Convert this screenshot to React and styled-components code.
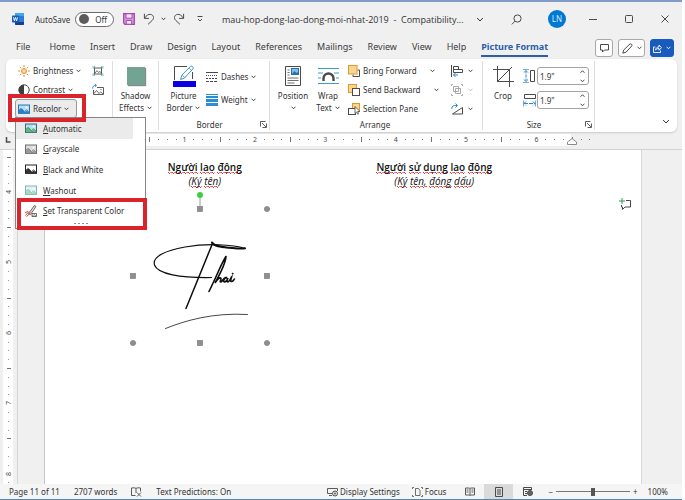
import React, { useState } from 'react';
import styled, { createGlobalStyle } from 'styled-components';


const GlobalStyle = createGlobalStyle`
  * {
    box-sizing: border-box;
  }

  body {
    margin: 0;
    background-color: #ffffff;
    font-family: 'Noto Sans', 'Open Sans', sans-serif;
    font-size: 8px;
    color: #333333;
  }

  button, input {
    margin: 0;
    padding: 0;
    border: none;
    background: none;
    font: inherit;
    color: inherit;
  }

  svg {
    display: block;
    flex-shrink: 0;
  }
`;

const Window = styled.div`
  display: flex;
  flex-direction: column;
  min-height: 100vh;
  margin-right: 3px;
  border-top: 2px solid #819cc9;
  border-bottom: 1px solid #4f86b8;
  background-color: #f0f0f0;
`;

/* title bar */

const TitleBar = styled.header`
  display: flex;
  align-items: center;
  height: 34px;
  padding: 0 10px 0 12px;
`;

const QuickAccess = styled.div`
  display: flex;
  align-items: center;
  width: 210px;
`;

const AutoSave = styled.label`
  display: flex;
  align-items: center;
  gap: 5px;
  margin: 0 6px 0 11px;
`;

const Toggle = styled.span`
  display: flex;
  align-items: center;
  gap: 6px;
  width: 39px;
  height: 15px;
  padding-left: 3px;
  border: 1px solid #6b6b6b;
  border-radius: 8px;
  background-color: #ffffff;

  input {
    appearance: none;
    width: 10px;
    height: 10px;
    border-radius: 50%;
    background-color: #5c5c5c;
  }
`;

const IconButton = styled.button`
  display: flex;
  align-items: center;
  justify-content: center;
  width: ${(props) => props.$width || 14}px;
  height: 16px;
`;

const DocTitle = styled.div`
  flex: 1;
  display: flex;
  align-items: center;
  gap: 12px;
  font-family: 'Open Sans', sans-serif;
  font-size: 9px;
  white-space: pre;
`;

const WindowButtons = styled.div`
  display: flex;
  align-items: center;
`;

const Avatar = styled.span`
  width: 18px;
  height: 18px;
  margin: 0 20px 0 25px;
  border-radius: 50%;
  background-color: #0078d4;
  color: #d9ecfb;
  line-height: 18px;
  text-align: center;
`;

/* tabs */

const TabBar = styled.div`
  display: flex;
  align-items: center;
  height: 23px;
  padding: 1px 8px 0 16px;
`;

const Tabs = styled.nav`
  flex: 1;
  display: flex;
  gap: 15px;
  font-size: 9px;
`;

const Tab = styled.button`
  height: 18px;
  line-height: 16px;
  white-space: nowrap;
  font-weight: ${(props) => (props.$active ? 700 : 400)};
  color: ${(props) => (props.$active ? '#2b5fa8' : '#3b3b3b')};
  border-bottom: 2px solid ${(props) => (props.$active ? '#2b5fa8' : 'transparent')};

  &:first-child {
    margin-right: 4px;
  }
`;

const TabActions = styled.div`
  display: flex;
  gap: 5px;
`;

const ActionButton = styled.button`
  display: flex;
  align-items: center;
  justify-content: center;
  gap: 4px;
  width: ${(props) => props.$width}px;
  height: 18px;
  border: 1px solid ${(props) => (props.$primary ? '#185abd' : '#a8a8a8')};
  border-radius: 3px;
  background-color: ${(props) => (props.$primary ? '#185abd' : '#ffffff')};
  color: ${(props) => (props.$primary ? '#ffffff' : '#3b3b3b')};
`;

/* ribbon */

const Ribbon = styled.section`
  display: flex;
  height: 73px;
  margin: 0 5px 0 6px;
  padding: 2px 0;
  border-radius: 6px;
  background-color: #ffffff;
  box-shadow: 0 1px 2px #c9c9c9;
`;

const Group = styled.div`
  display: flex;
  flex-direction: column;
  width: ${(props) => props.$width}px;
  border-right: 1px solid #dedede;
`;

const GroupBody = styled.div`
  display: flex;
  height: 57px;
  padding-left: ${(props) => props.$indent || 0}px;
`;

const GroupLabel = styled.div`
  display: flex;
  align-items: center;
  height: 12px;
  padding-right: 2px;
  text-align: center;

  span {
    flex: 1;
  }
`;

const Stack = styled.div`
  display: flex;
  flex-direction: column;
  justify-content: ${(props) => (props.$gap ? 'flex-start' : 'center')};
  width: ${(props) => props.$width}px;
  padding-top: ${(props) => (props.$gap ? 6 : 0)}px;
  padding-left: ${(props) => props.$indent || 0}px;
  gap: ${(props) => props.$gap || 0}px;
`;

const ToolButton = styled.button`
  display: flex;
  align-items: center;
  gap: ${(props) => props.$gap || 3}px;
  height: 19px;
  white-space: nowrap;
`;

const Split = styled.span`
  display: flex;
  margin-left: 10px;
`;

const BigButton = styled.button`
  display: flex;
  flex-direction: column;
  align-items: center;
  width: ${(props) => props.$width}px;

  .icon {
    display: flex;
    align-items: center;
    height: 29px;
  }

  .line {
    display: flex;
    align-items: center;
    gap: 3px;
    height: 12px;
    line-height: 12px;
    white-space: nowrap;
  }
`;

const ShadowSwatch = styled.span`
  width: 18px;
  height: 18px;
  background-color: #72a393;
  box-shadow: 1px 1px 1px #8a8a8a;
`;

const RecolorBox = styled.div`
  position: relative;
  width: 62px;
  margin-left: -3px;
`;

const RecolorButton = styled.button`
  display: flex;
  align-items: center;
  gap: 3px;
  width: 100%;
  height: 19px;
  padding-left: 2px;
  border: 1px solid #9b9b9b;
  border-radius: 3px;
  background-color: #ebebeb;
`;

const Highlight = styled.span`
  position: absolute;
  z-index: 3;
  inset: ${(props) => props.$inset};
  border: 4px solid #da232b;
  pointer-events: none;
`;

const Menu = styled.div`
  position: absolute;
  z-index: 2;
  top: 18px;
  left: 0;
  display: flex;
  flex-direction: column;
  width: 131px;
  height: 112px;
  border: 1px solid #868686;
  background-color: #ffffff;
`;

const MenuItem = styled.button`
  flex: 1;
  display: flex;
  align-items: center;
  gap: 6px;
  width: 117px;
  padding-left: 9px;
  background-color: ${(props) => (props.$hover ? '#ebebeb' : 'transparent')};
  white-space: nowrap;

  u {
    text-underline-offset: 1px;
  }
`;

const MenuGrip = styled.div`
  display: flex;
  justify-content: center;
  gap: 2px;
  height: 7px;
  padding-top: 2px;

  i {
    width: 2px;
    height: 1px;
    background-color: #8f8f8f;
  }
`;

const SizeField = styled.label`
  display: flex;
  align-items: center;
`;

const Spinner = styled.span`
  display: flex;
  align-items: center;
  width: 52px;
  height: 18px;
  padding: 0 3px 0 2px;
  border: 1px solid #a3a3a3;
  border-radius: 3px;

  input {
    flex: 1;
    min-width: 0;
    outline: none;
  }
`;

const SpinnerArrows = styled.span`
  display: flex;
  flex-direction: column;
  gap: 5px;
`;

const Collapse = styled.button`
  align-self: flex-end;
  margin: 0 7px 6px auto;
`;

/* document */

const RulerBar = styled.div`
  display: flex;
  height: 18px;
  padding: 2px 0 0 5px;
  border-bottom: 1px solid #d2d2d2;
`;

const Workspace = styled.main`
  flex: 1;
  display: flex;
`;

const SideRuler = styled.div`
  width: 18px;
  padding-left: 3px;
  border-right: 1px solid #d6d6d6;
`;

const Page = styled.article`
  flex: 1;
  display: grid;
  grid-template-columns: 1fr 1fr 92px;
  align-content: start;
  margin: 0 40px 0 26px;
  padding: 10px 0 0 45px;
  border-left: 1px solid #c6c6c6;
  border-right: 1px solid #d6d6d6;
  background-color: #ffffff;
  color: #111111;
  font-family: 'Open Sans', 'Noto Sans', sans-serif;
  font-size: 10px;
  line-height: 14px;
  text-align: center;

  p {
    margin: 0;
  }

  b {
    font-weight: 600;
  }
`;

const Misspelt = styled.span`
  background:
    linear-gradient(45deg, transparent 65%, #d8322c 80%, transparent 90%),
    linear-gradient(135deg, transparent 5%, #d8322c 15%, transparent 25%),
    linear-gradient(135deg, transparent 45%, #d8322c 55%, transparent 65%),
    linear-gradient(45deg, transparent 25%, #d8322c 35%, transparent 50%);
  background-repeat: repeat-x;
  background-size: 4px 2px;
  background-position: 0 100%;
`;

const Picture = styled.div`
  margin: 7px 0 0 43px;

  svg {
    overflow: visible;
  }
`;

const CommentMark = styled.div`
  padding: 38px 0 0 70px;
`;

/* status bar */

const StatusBar = styled.footer`
  display: flex;
  align-items: center;
  height: 15px;
  padding: 0 14px 0 9px;
  background-color: #f5f5f5;
  white-space: nowrap;
`;

const StatusGroup = styled.div`
  display: flex;
  align-items: center;
  gap: ${(props) => (props.$grow ? 14 : 12)}px;
  flex: ${(props) => (props.$grow ? 1 : 'none')};
  margin-right: 9px;
`;

const StatusButton = styled.button`
  display: flex;
  align-items: center;
  gap: 2px;
`;

const ViewButton = styled.button`
  display: flex;
  align-items: center;
  justify-content: center;
  width: 29px;
  height: 15px;
  background-color: ${(props) => (props.$active ? '#dadada' : 'transparent')};
`;

const ZoomControl = styled.label`
  display: flex;
  align-items: center;
  gap: 3px;
  margin: 0 10px 0 6px;

  input {
    appearance: none;
    width: 74px;
    height: 15px;
    background: linear-gradient(#777777, #777777) center / 100% 1px no-repeat;
  }

  input::-webkit-slider-thumb {
    appearance: none;
    width: 4px;
    height: 8px;
    background-color: #555555;
  }
`;


function Chevron({ size = 6, up = false, color = 'currentColor' }) {
  return (
    <svg width={size} height={size / 2 + 1} viewBox="0 0 6 4" fill="none" stroke={color} strokeWidth={size > 6 ? 0.8 : 1.1}>
      <path d={up ? 'M.7 3.2 3 .8l2.3 2.4' : 'M.7.8 3 3.2 5.3.8'} />
    </svg>
  );
}

function Icon({ w = 12, h = 12, children }) {
  return (
    <svg width={w} height={h} viewBox={`0 0 ${w} ${h}`} fill="none" stroke="#4a4a4a" strokeWidth="1">
      {children}
    </svg>
  );
}

function WordLogo() {
  return (
    <Icon>
      <g stroke="none">
        <rect x="3" y="0" width="9" height="12" rx="1" fill="#2b7cd3" />
        <path d="M3 1a1 1 0 0 1 1-1h7a1 1 0 0 1 1 1v2H3z" fill="#41a5ee" />
        <path d="M3 9h9v2a1 1 0 0 1-1 1H4a1 1 0 0 1-1-1z" fill="#103f91" />
        <rect x="0" y="2.5" width="7" height="7" rx=".8" fill="#185abd" />
      </g>
      <path d="m1.5 4.2.9 3.6 1.1-3.4 1.1 3.4.9-3.6" stroke="#ffffff" strokeWidth=".9" />
    </Icon>
  );
}

function SaveIcon() {
  return (
    <Icon>
      <path d="M.7.7h10.6v10.6H1.9L.7 10z" fill="#d69add" stroke="#a23fae" strokeWidth="1.2" />
      <path d="M3 .8h6v4.4H3zM3.3 7.5h5.4v3.7H3.3z" fill="#f6ebf7" stroke="#a23fae" strokeWidth=".9" />
    </Icon>
  );
}

function UndoIcon({ redo }) {
  return (
    <Icon>
      <path
        transform={redo ? 'matrix(-1 0 0 1 12 0)' : undefined}
        d="M1.4.8v4.6h4.5M1.6 5.2C3.2 2.6 5.2 1 7.6 1.4c3 .5 3.8 3.7 1.9 5.7L5 11.4"
      />
    </Icon>
  );
}

function PhotoIcon({ sky = '#b9dcf5', hill = '#2a7fc9', line = '#2b76b9' }) {
  return (
    <Icon w={12} h={10}>
      <rect x=".5" y="1" width="11" height="8.4" fill={sky} stroke={line} />
      <path d="M1 6.4c1-1.4 2-2.2 3-1.5l3 3 1.6-1.5L11 8.2v.8H1z" fill={hill} stroke="none" />
      <path d="M1 6.2c1-1.4 2-2.2 3-1.2L7.6 9M7 7l1.6-1.2L11 8" stroke={line} strokeWidth=".7" />
      <circle cx="8.6" cy="3.4" r="1" fill="#ffffff" stroke="none" />
    </Icon>
  );
}

function SunIcon() {
  return (
    <Icon>
      <circle cx="6" cy="6" r="2.5" fill="#fbd3a0" stroke="#e8912d" />
      <path d="M6 0v2M6 10v2M0 6h2M10 6h2M1.8 1.8l1.4 1.4M8.8 8.8l1.4 1.4M1.8 10.2l1.4-1.4M8.8 3.2l1.4-1.4" stroke="#e8912d" />
    </Icon>
  );
}

function ContrastIcon() {
  return (
    <Icon>
      <circle cx="6" cy="6" r="5.2" fill="#ffffff" />
      <path d="M6 .8a5.2 5.2 0 0 0 0 10.4z" fill="#3d3d3d" stroke="none" />
    </Icon>
  );
}

function CompressIcon() {
  return (
    <Icon>
      <rect x="2.5" y="3" width="7" height="6" strokeWidth=".9" />
      <path d="m3 8 2-2.4 1.6 1.9L8 6.4 9.3 8" strokeWidth=".8" />
      <path d="m.5 1 2 2m0-2v2h-2M11.5 1l-2 2m0-2v2h2M.5 11l2-2m0 2V9h-2M11.5 11l-2-2m0 2V9h2" stroke="#4b9c9a" strokeWidth=".7" />
    </Icon>
  );
}

function ChangePictureIcon() {
  return (
    <Icon>
      <path d="M5 3.5h6.5v7h-10V6" strokeWidth=".9" />
      <path d="m2 9.5 2.5-3 2.5 3 1.5-1.7L11 10" strokeWidth=".8" />
      <path d="M.6 4.6C.6 2 2 1.4 4 1.4M3 0l1.5 1.4L3 2.9" stroke="#2b88c9" strokeWidth=".9" />
      <circle cx="9" cy="5.6" r=".6" fill="#4a4a4a" stroke="none" />
    </Icon>
  );
}

function PictureBorderIcon() {
  return (
    <Icon w={24} h={22}>
      <path d="M15 1.5H2.5V15M20.5 7v7" />
      <path d="M8.5 14.5 10 10l8.5-8.7c1-.9 3.5 1 2.5 2.4L12.5 13z" fill="#ffffff" stroke="#3f95bf" />
      <path d="m10.6 10.2 2 2.4M17 3l2.6 2.6" stroke="#3f95bf" strokeWidth=".8" />
      <rect x="1" y="16" width="23" height="6" fill="#0a00e6" stroke="none" />
    </Icon>
  );
}

function DashesIcon() {
  return (
    <Icon>
      <path d="M0 1.5h12" />
      <path d="M0 4.5h12" strokeDasharray="1 1" />
      <path d="M0 7.5h12" strokeDasharray="2 1" />
      <path d="M0 10.5h12" strokeDasharray="3 1" />
    </Icon>
  );
}

function WeightIcon() {
  return (
    <Icon>
      <g stroke="none" fill="#2a8fd0">
        <rect y="0" width="12" height="1" />
        <rect y="2" width="12" height="2" />
        <rect y="5" width="12" height="3" />
        <rect y="9" width="12" height="3" />
      </g>
    </Icon>
  );
}

function PositionIcon() {
  return (
    <Icon w={18} h={22}>
      <path d="M1.5 1.5h15v19h-15z" />
      <path d="M3.5 5h2M3.5 7.5h2M3.5 10h2M3.5 13h11M3.5 15.5h11M3.5 18h7" strokeWidth=".8" />
      <rect x="7.5" y="3.5" width="7" height="6" fill="#7fc0ee" stroke="#2a6fa5" />
      <path d="m8 9 2.5-3 2 2 1-1 1 2z" fill="#2a6fa5" stroke="none" />
    </Icon>
  );
}

function WrapIcon() {
  return (
    <Icon w={21} h={18}>
      <path d="M0 1.5h21M0 6h5M16 6h5M0 11h3M18 11h3M0 16.5h21" stroke="#3c9bc9" />
      <path d="M5.5 14v-2.5a5 5 0 0 1 10 0V14" strokeWidth="2.4" />
    </Icon>
  );
}

function ForwardIcon() {
  return (
    <Icon>
      <path d="M9.5 5h2v6.5H5v-2" />
      <rect x=".5" y=".5" width="8.5" height="8.5" fill="#fbd590" stroke="#d99a34" />
    </Icon>
  );
}

function BackwardIcon() {
  return (
    <Icon>
      <rect x=".5" y=".5" width="8" height="8" fill="#fbd590" stroke="#d99a34" />
      <rect x="4.5" y="4.5" width="7" height="7" fill="#ffffff" />
    </Icon>
  );
}

function SelectionIcon() {
  return (
    <Icon>
      <rect x="4.5" y=".5" width="7" height="8" fill="#fbd590" stroke="#d99a34" />
      <rect x=".5" y="5.5" width="7" height="6" fill="#ffffff" />
      <path d="M7 3.5v7L8.7 9l1 2.2 1-.5-1-2.2H12z" fill="#ffffff" strokeWidth=".8" />
    </Icon>
  );
}

function AlignIcon() {
  return (
    <Icon>
      <path d="M.5 0v12M2.5 1.5h5v3h-5zM2.5 4.5h9v3h-9z" />
      <path d="M7 10H2.5M4.5 8l-2 2 2 2" stroke="#2b88c9" />
    </Icon>
  );
}

function GroupIcon() {
  return (
    <Icon>
      <g stroke="#a9a9a9">
        <path d="M2.5 2.5h5v5h-5zM4.5 4.5h5v5h-5z" />
        <path d="M.5 2V.5H2M10 .5h1.5V2M.5 10v1.5H2M10 11.5h1.5V10" />
      </g>
    </Icon>
  );
}

function RotateIcon() {
  return (
    <Icon>
      <path d="M1.5 11h10V4.5z" />
      <path d="M.8 6C.6 3 2.5 2.2 6 2.5M4.5.5l2 2-2 2" stroke="#2b88c9" />
    </Icon>
  );
}

function CropIcon() {
  return (
    <Icon w={22} h={22}>
      <path d="M5.5 1v15.5H22M1 4.5h16.5V22M5.5 16.5 20 2" />
    </Icon>
  );
}

function HeightIcon() {
  return (
    <Icon w={14} h={14}>
      <path d="M7.5 1.5h4v11h-4z" />
      <path d="M3 1.5v11M1 3.5l2-2 2 2M1 10.5l2 2 2-2" stroke="#2b88c9" strokeDasharray="3 1" />
      <path d="M0 .5h6M0 13.5h6" stroke="#2b88c9" strokeWidth=".7" />
    </Icon>
  );
}

function WidthIcon() {
  return (
    <Icon w={14} h={14}>
      <path d="M1.5 1.5h11v4h-11z" />
      <path d="M1 10.5h11M3 8.5l-2 2 2 2M10 8.5l2 2-2 2" stroke="#2b88c9" strokeDasharray="4 1" />
      <path d="M.5 7.5v6M12.5 7.5v6" stroke="#2b88c9" strokeWidth=".7" />
    </Icon>
  );
}

function LauncherIcon() {
  return (
    <Icon w={7} h={7}>
      <path d="M.5 5.5v-5h5M2 2l4 4M6.5 2.5v4h-4" strokeWidth=".9" />
    </Icon>
  );
}

function EraserPenIcon() {
  return (
    <Icon>
      <path d="m3.5 8.5 6-8 1.5 1-5.5 8z" fill="#f3d5d2" strokeWidth=".8" />
      <path d="m.5 10.5 3.500-4M1.500 11.500l4-3.500M0 8l3-2" stroke="#d0433f" />
      <path d="M7 11.5v-3h4.500v3z" strokeWidth=".8" />
      <path d="M7.5 11 9 9.500l2 1.700" strokeWidth=".7" />
    </Icon>
  );
}

// an inch is 70.4px on screen, split in eight
const EIGHTH = 8.8;

function HorizontalRuler() {
  const marks = [];
  for (let i = -4; i < 47; i++) {
    const x = 179.5 + i * EIGHTH;
    if (i % 8 === 0 && i <= 40) {
      marks.push(<text key={i} x={x} y="8" textAnchor="middle" fontSize="7" fill="#4a4a4a" stroke="none">{i / 8 + 1}</text>);
    } else if ((i + 4) % 8 === 0) {
      marks.push(<path key={i} d={`M${Math.round(x)}.5 3v5`} stroke="#777777" />);
    } else {
      marks.push(<path key={i} d={`M${Math.round(x)} 5.5h1`} stroke="#777777" />);
    }
  }
  return (
    <Icon w={640} h={12}>
      <rect x="39" y="0" width="527" height="12" fill="#ffffff" stroke="none" />
      <path d="M1.5 3v5h4" stroke="#4a4a4a" strokeWidth="1.5" />
      {marks}
      <path d="M562.5 10.5V8L567 4.500 571.500 8v2.500z" fill="#ffffff" stroke="#8a8a8a" />
    </Icon>
  );
}

function VerticalRuler() {
  const marks = [];
  for (let i = -4; i < 34; i++) {
    const y = Math.round(42 + i * EIGHTH);
    if (i % 8 === 0) {
      marks.push(
        <text key={i} transform={`translate(8 ${y}) rotate(-90)`} textAnchor="middle" fontSize="7" fill="#4a4a4a" stroke="none">
          {i / 8 + 4}
        </text>
      );
    } else if ((i + 4) % 8 === 0) {
      marks.push(<path key={i} d={`M4 ${y}.5h4`} stroke="#777777" />);
    } else {
      marks.push(<path key={i} d={`M5.5 ${y}v1`} stroke="#999999" />);
    }
  }
  return (
    <Icon w={10} h={334}>
      <rect width="10" height="334" fill="#ffffff" stroke="none" />
      {marks}
    </Icon>
  );
}

function Signature() {
  const squares = [[67, 14], [0, 81], [134, 81], [67, 148]];
  const dots = [[134, 14], [0, 148], [134, 148]];
  return (
    <svg width="134" height="154" viewBox="0 0 134 154" fill="none" stroke="#0d0d0d" strokeLinecap="round">
      <path d="M67 3v8" stroke="#9a9a9a" />
      <circle cx="67" cy="0" r="3" fill="#3fcf45" stroke="none" />
      <path d="M112 53.500C100 49 72 48.500 52 52 32 55.500 19 62 21.500 70c3 9 26 13 57 12.500" strokeWidth="1.200" />
      <path d="M79.500 48.500 53 113.500" strokeWidth="1.500" />
      <path d="M79 47.500c2 4 9 4.500 17 5.200 6 .5 12 1.300 16 .6" strokeWidth="2" />
      <path d="M76 96.500c4-8 8-17 10.500-22.500 2-4.500 5-10 6.500-13 0 6-6 18-11 27 2.500-3.500 5-6.500 6-4.500.5 1.500-2 3.500 0 3.500 1.500 0 2-4 4.500-4.500 2 0 1 1 1 0-2 0-4 4-2 4.500 1.500 0 3-2.500 3.500-4-1 2-1.500 4 0 4 1.500-.3 3-4.500 3.500-5-.5 2-1.500 4.500 0 4.500s2-1.500 3-2.500M99.500 78.500l.4.200" strokeWidth="1.600" />
      <path d="M32.500 133.500c20-8 47-16 82-14" stroke="#333333" strokeWidth=".9" />
      {squares.map(([x, y]) => (
        <rect key={`${x}-${y}`} x={x - 2.5} y={y - 2.5} width="5" height="5" fill="#8f8f8f" stroke="#7d7d7d" strokeWidth=".7" />
      ))}
      {dots.map(([x, y]) => (
        <circle key={`${x}-${y}`} cx={x} cy={y} r="2.600" fill="#8f8f8f" stroke="#7d7d7d" strokeWidth=".7" />
      ))}
    </svg>
  );
}


const tabs = ['File', 'Home', 'Insert', 'Draw', 'Design', 'Layout', 'References', 'Mailings', 'Review', 'View', 'Help', 'Picture Format'];

const recolorItems = [
  { label: 'Automatic', icon: <PhotoIcon sky="#b5e0f0" hill="#62bb6b" line="#3d6b75" /> },
  { label: 'Grayscale', icon: <PhotoIcon sky="#dcdcdc" hill="#9a9a9a" line="#6e6e6e" /> },
  { label: 'Black and White', icon: <PhotoIcon sky="#ffffff" hill="#333333" line="#222222" /> },
  { label: 'Washout', icon: <PhotoIcon sky="#dff2f7" hill="#a9dcb4" line="#86b5bd" /> },
  { label: 'Set Transparent Color', icon: <EraserPenIcon /> },
];

function RecolorMenu() {
  return (
    <Menu role="menu">
      {recolorItems.map((item, index) => (
        <MenuItem key={item.label} role="menuitem" $hover={index === 0}>
          {item.icon}
          <span><u>{item.label[0]}</u>{item.label.slice(1)}</span>
        </MenuItem>
      ))}
      <MenuGrip><i /><i /><i /><i /></MenuGrip>
      <Highlight $inset="80px -2px -2px 1px" />
    </Menu>
  );
}

function Words({ text }) {
  return text.split(' ').map((word, index) => (
    <React.Fragment key={index}>
      {index > 0 && ' '}
      <Misspelt>{word}</Misspelt>
    </React.Fragment>
  ));
}

function App() {
  const [autoSave, setAutoSave] = useState(false);
  const [menuOpen, setMenuOpen] = useState(true);
  const [activeTab, setActiveTab] = useState('Picture Format');
  const [size, setSize] = useState({ height: '1.9"', width: '1.9"' });
  const [zoom, setZoom] = useState(100);

  return (
    <>
      <GlobalStyle />
      <Window>
        <TitleBar>
          <QuickAccess>
            <WordLogo />
            <AutoSave>
              AutoSave
              <Toggle>
                <input type="checkbox" checked={autoSave} onChange={() => setAutoSave(!autoSave)} />
                {autoSave ? 'On' : 'Off'}
              </Toggle>
            </AutoSave>
            <IconButton aria-label="Save" $width={18}><SaveIcon /></IconButton>
            <IconButton aria-label="Undo" $width={22}><UndoIcon /></IconButton>
            <IconButton aria-label="Undo list" $width={6}><Chevron size={5} /></IconButton>
            <IconButton aria-label="Redo" $width={26}><UndoIcon redo /></IconButton>
            <IconButton aria-label="Customize toolbar" $width={16}>
              <Icon w={6} h={6}><path d="M.5.5h5M1 3l2 2 2-2" /></Icon>
            </IconButton>
          </QuickAccess>
          <DocTitle>
            {'mau-hop-dong-lao-dong-moi-nhat-2019  -  Compatibility...'}
            <Chevron size={8} />
          </DocTitle>
          <WindowButtons>
            <IconButton aria-label="Search">
              <Icon w={11} h={11}><circle cx="6.500" cy="4.500" r="3.600" /><path d="M4 7.200.8 10.400" /></Icon>
            </IconButton>
            <Avatar>LN</Avatar>
            <IconButton aria-label="Minimize"><Icon w={8} h={8}><path d="M0 4.500h8" /></Icon></IconButton>
            <IconButton aria-label="Maximize" $width={58}><Icon w={8} h={8}><rect x=".5" y=".5" width="7" height="7" rx="1" /></Icon></IconButton>
            <IconButton aria-label="Close"><Icon w={8} h={8}><path d="m.5.5 7 7M7.500.5l-7 7" /></Icon></IconButton>
          </WindowButtons>
        </TitleBar>

        <TabBar>
          <Tabs>
            {tabs.map((tab) => (
              <Tab key={tab} $active={tab === activeTab} onClick={() => setActiveTab(tab)}>{tab}</Tab>
            ))}
          </Tabs>
          <TabActions>
            <ActionButton $width={18} aria-label="Comments">
              <Icon w={9} h={9}><path d="M.5.5h8V6h-4l-2 2V6h-2z" /></Icon>
            </ActionButton>
            <ActionButton $width={27} aria-label="Editing">
              <Icon w={11} h={11}><path d="M.8 10.200 1.700 7 8 .9c.8-.7 2.600.9 1.900 1.900L4 9.200z" /></Icon>
              <Chevron size={5} />
            </ActionButton>
            <ActionButton $width={24} $primary aria-label="Share">
              <svg width="9" height="9" viewBox="0 0 9 9" fill="none" stroke="#ffffff" strokeWidth=".9">
                <path d="M2.500 3h-2v5.500h7v-2M2.500 6c.3-2 1.500-3 3.500-3V1l2.500 2.700L6 6.200V4.500C4.500 4.500 3.500 5 2.500 6z" />
              </svg>
              <Chevron size={5} />
            </ActionButton>
          </TabActions>
        </TabBar>

        <Ribbon>
          <Group $width={107}>
            <GroupBody $indent={12}>
              <Stack $width={74}>
                <ToolButton><SunIcon />Brightness<Chevron size={5} /></ToolButton>
                <ToolButton><ContrastIcon />Contrast<Chevron size={5} /></ToolButton>
                <RecolorBox>
                  <RecolorButton aria-haspopup="menu" aria-expanded={menuOpen} onClick={() => setMenuOpen(!menuOpen)}>
                    <PhotoIcon />
                    Recolor
                    <Chevron size={5} />
                  </RecolorButton>
                  {menuOpen && <RecolorMenu />}
                  <Highlight $inset="-5px -9px -4px -7px" />
                </RecolorBox>
              </Stack>
              <Stack $width={14}>
                <ToolButton aria-label="Compress Pictures"><CompressIcon /></ToolButton>
                <ToolButton aria-label="Change Picture"><ChangePictureIcon /></ToolButton>
                <ToolButton as="span" />
              </Stack>
            </GroupBody>
          </Group>

          <Group $width={46}>
            <GroupBody>
              <BigButton $width={45}>
                <span className="icon"><ShadowSwatch /></span>
                <span className="line">Shadow</span>
                <span className="line">Effects<Chevron size={5} /></span>
              </BigButton>
            </GroupBody>
          </Group>

          <Group $width={111}>
            <GroupBody $indent={2}>
              <BigButton $width={45}>
                <span className="icon"><PictureBorderIcon /></span>
                <span className="line">Picture</span>
                <span className="line">Border<Chevron size={5} /></span>
              </BigButton>
              <Stack $width={62} $gap={4}>
                <ToolButton><DashesIcon />Dashes<Chevron size={5} /></ToolButton>
                <ToolButton><WeightIcon />Weight<Chevron size={5} /></ToolButton>
              </Stack>
            </GroupBody>
            <GroupLabel><span>Border</span><LauncherIcon /></GroupLabel>
          </Group>

          <Group $width={213}>
            <GroupBody $indent={3}>
              <BigButton $width={40}>
                <span className="icon"><PositionIcon /></span>
                <span className="line">Position</span>
                <span className="line"><Chevron size={5} /></span>
              </BigButton>
              <BigButton $width={30}>
                <span className="icon"><WrapIcon /></span>
                <span className="line">Wrap</span>
                <span className="line">Text<Chevron size={5} /></span>
              </BigButton>
              <Stack $width={108} $indent={5}>
                <ToolButton><ForwardIcon />Bring Forward<Split><Chevron size={5} /></Split></ToolButton>
                <ToolButton><BackwardIcon />Send Backward<Split><Chevron size={5} /></Split></ToolButton>
                <ToolButton><SelectionIcon />Selection Pane</ToolButton>
              </Stack>
              <Stack $width={24}>
                <ToolButton $gap={5}><AlignIcon /><Chevron size={5} /></ToolButton>
                <ToolButton $gap={5}><GroupIcon /><Chevron size={5} color="#b5b5b5" /></ToolButton>
                <ToolButton $gap={5}><RotateIcon /><Chevron size={5} /></ToolButton>
              </Stack>
            </GroupBody>
            <GroupLabel><span>Arrange</span></GroupLabel>
          </Group>

          <Group $width={112}>
            <GroupBody>
              <BigButton $width={40}>
                <span className="icon"><CropIcon /></span>
                <span className="line">Crop</span>
              </BigButton>
              <Stack $width={67} $gap={6}>
                <SizeField>
                  <HeightIcon />
                  <Spinner>
                    <input aria-label="Height" value={size.height} onChange={(e) => setSize({ ...size, height: e.target.value })} />
                    <SpinnerArrows><Chevron size={5} up /><Chevron size={5} /></SpinnerArrows>
                  </Spinner>
                </SizeField>
                <SizeField>
                  <WidthIcon />
                  <Spinner>
                    <input aria-label="Width" value={size.width} onChange={(e) => setSize({ ...size, width: e.target.value })} />
                    <SpinnerArrows><Chevron size={5} up /><Chevron size={5} /></SpinnerArrows>
                  </Spinner>
                </SizeField>
              </Stack>
            </GroupBody>
            <GroupLabel><span>Size</span><LauncherIcon /></GroupLabel>
          </Group>
          <Collapse aria-label="Collapse ribbon"><Chevron size={8} /></Collapse>
        </Ribbon>

        <RulerBar><HorizontalRuler /></RulerBar>

        <Workspace>
          <SideRuler><VerticalRuler /></SideRuler>
          <Page>
            <div>
              <p><b><Words text="Người lao động" /></b></p>
              <p><i>(<Words text="Ký tên" />)</i></p>
              <Picture><Signature /></Picture>
            </div>
            <div>
              <p><b><Words text="Người sử dụng lao động" /></b></p>
              <p><i>(<Words text="Ký tên, đóng dấu" />)</i></p>
            </div>
            <CommentMark>
              <Icon>
                <path d="M7 2.500h4.500V9H6l-2.500 2.500V9h-1V7" />
                <path d="M3 0v6M0 3h6" stroke="#2c9a4b" />
              </Icon>
            </CommentMark>
          </Page>
        </Workspace>

        <StatusBar>
          <StatusGroup $grow>
            <span>Page 11 of 11</span>
            <span>2707 words</span>
            <Icon w={11} h={10}>
              <path d="M5 1.500C4 .7 2.500.7.500 1v7.500h4M5 1.500V6M5 1.500C6 .7 7.500.7 9.500 1v3.500M6 5.500l4 4M10 5.500l-4 4" strokeWidth=".9" />
            </Icon>
            <span>Text Predictions: On</span>
          </StatusGroup>
          <StatusGroup>
            <StatusButton>
              <Icon w={11} h={10}>
                <path d="M5 6.500H.5v-5h10V4M2 8.500h3" strokeWidth=".9" />
                <circle cx="8" cy="6.500" r="2.500" />
                <circle cx="8" cy="6.500" r=".7" />
              </Icon>
              Display Settings
            </StatusButton>
            <StatusButton>
              <Icon w={11} h={10}>
                <path d="M3.500 1.500h3l1.500 2v5H3.500zM2 .5H.5V2M9 .5h1.500V2M.5 8v1.500H2M10.500 8v1.500H9" strokeWidth=".8" />
              </Icon>
              Focus
            </StatusButton>
          </StatusGroup>
          <ViewButton aria-label="Read Mode">
            <Icon w={10} h={9}>
              <path d="M5 1.500v7M.5 1h4l.5.5.5-.5h4v7h-4L5 8.500 4.500 8h-4zM1.500 3h2M1.500 5h2M6.500 3h2M6.500 5h2" strokeWidth=".9" />
            </Icon>
          </ViewButton>
          <ViewButton aria-label="Print Layout" $active>
            <Icon w={8} h={10}><path d="M.5.5h7v9h-7zM2 3h4M2 5h4M2 7h4" /></Icon>
          </ViewButton>
          <ViewButton aria-label="Web Layout">
            <Icon w={10} h={9}>
              <path d="M4 8.500H.5v-8h8V3M.5 2.500h8M2 4.500h2M2 6.500h2" />
              <circle cx="7" cy="6" r="2.500" fill="#666666" />
            </Icon>
          </ViewButton>
          <ZoomControl>
            <span>−</span>
            <input type="range" aria-label="Zoom" min="10" max="190" value={zoom} onChange={(e) => setZoom(Number(e.target.value))} />
            <span>+</span>
          </ZoomControl>
          <span>{zoom}%</span>
        </StatusBar>
      </Window>
    </>
  );
}

export default App;
